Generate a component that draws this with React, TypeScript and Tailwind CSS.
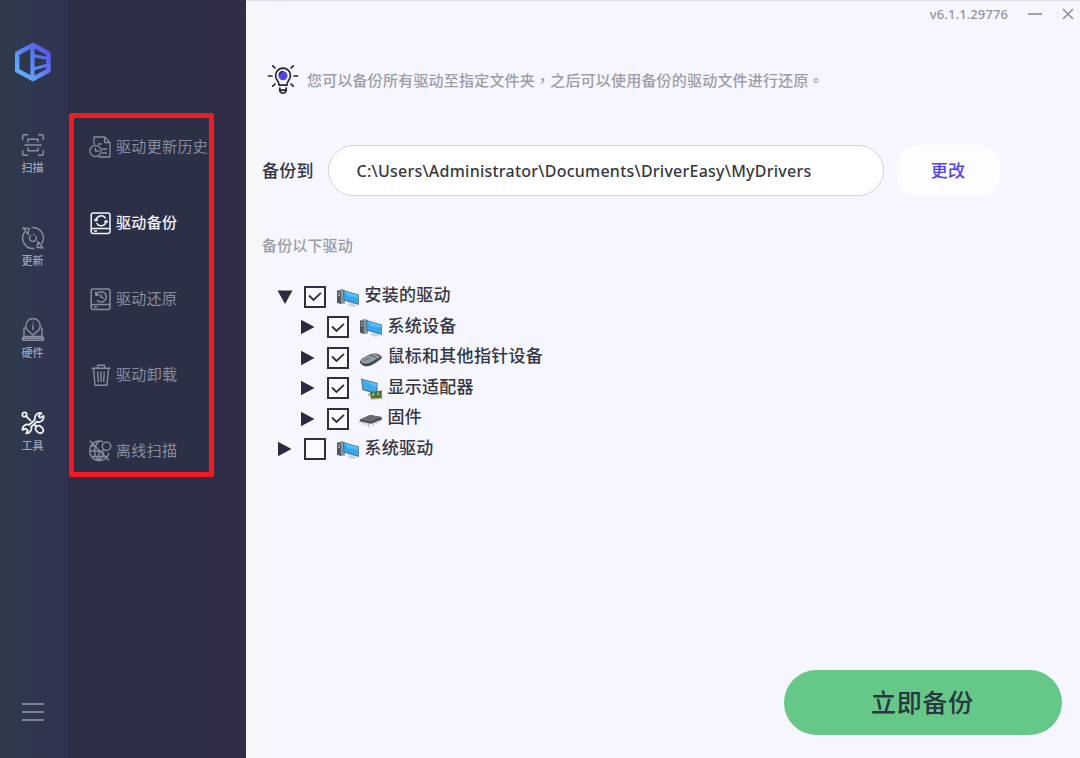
import type { ReactNode } from 'react';

function Logo() {
  return (
    <svg width="38" height="40" viewBox="0 0 38 40" fill="none" strokeLinejoin="round">
      <defs>
        <linearGradient id="logo" x1="4" y1="34" x2="34" y2="6" gradientUnits="userSpaceOnUse">
          <stop offset="0" stopColor="#62b4fb" />
          <stop offset="0.5" stopColor="#5a84f6" />
          <stop offset="1" stopColor="#5b50e8" />
        </linearGradient>
      </defs>
      <g stroke="url(#logo)">
        <path d="M19 3 34.5 11.5V28.5L19 37 3.2 28.5V11.5Z" strokeWidth="4.4" />
        <path d="M18.5 3V37" strokeWidth="4.2" />
        <path d="M19 13.5 34 16.5M19 27 34 23" strokeWidth="3.2" />
      </g>
    </svg>
  );
}

function ScanIcon() {
  return (
    <svg width="24" height="24" viewBox="0 0 24 24" fill="none" stroke="currentColor" strokeWidth="1.4">
      <path d="M1.7 7V3Q1.7 1.7 3 1.7H7M17 1.7H21Q22.3 1.7 22.3 3V7M22.3 17V21Q22.3 22.3 21 22.3H17M7 22.3H3Q1.7 22.3 1.7 21V17" />
      <path d="M7 9.5V6.2H17V9.5M7 14.5V17.8H17V14.5M3.5 12H20.5" />
    </svg>
  );
}

function UpdateIcon() {
  return (
    <svg width="24" height="24" viewBox="0 0 24 24" fill="none" stroke="currentColor" strokeWidth="1.4" strokeLinejoin="round">
      <path d="M10.5 1.6A10.5 10.5 0 0 1 20.3 18.2M13.5 22.4A10.5 10.5 0 0 1 3.7 5.8" />
      <path d="M2 2 8 2.7 7 8.2ZM22 22 16 21.3 17 15.8Z" />
      <path d="M10 9A3.5 3.5 0 1 0 14.8 10M12 8.4A3.5 3.5 0 0 1 13.8 8.9" />
    </svg>
  );
}

function HardwareIcon() {
  return (
    <svg width="24" height="24" viewBox="0 0 24 24" fill="none" stroke="currentColor" strokeWidth="1.4" strokeLinejoin="round">
      <path d="M12 17 6.6 12.4A7.2 7.2 0 1 1 17.4 12.4Z" />
      <path d="M12 6.8V12.2M12 4.5V5.5" />
      <path d="M4.5 10H3V18.5H21V10H19.5M3 18.5 1.5 20V22.3H22.5V20L21 18.5M1.5 20.2H22.5" />
    </svg>
  );
}

function ToolsIcon() {
  return (
    <svg width="24" height="24" viewBox="0 0 24 24" fill="none" stroke="currentColor" strokeWidth="1.8" strokeLinejoin="round" strokeLinecap="round">
      <path d="M20.5 2.2A5 5 0 0 0 14 8L12.9 9.7 8.2 13.8A5 5 0 0 0 1.5 19L4.7 17.7 6.9 19.5 5.2 22.4A5 5 0 0 0 10.2 16L15.7 10.6A5 5 0 0 0 22.5 5L19.2 6.8 17.3 4.9Z" />
      <circle cx="3.5" cy="3.5" r="2.2" />
      <path d="M5.1 5.1 9.6 9.6M14 14 15.5 15.5" />
      <path d="M15.4 15.3Q18 13.7 20.2 15.8L21.4 17Q23.3 19.3 21.4 21.3 19.3 23.2 17 21.4L15.3 19.7Q13.6 17.6 15.4 15.3Z" />
    </svg>
  );
}

function HistoryIcon() {
  return (
    <svg width="24" height="24" viewBox="0 0 24 24" fill="none" stroke="currentColor" strokeWidth="1.3" strokeLinejoin="round">
      <path d="M5 9.5V2H15.5L21 7.5V22H9.5M15.5 2V7.5H21" />
      <circle cx="6.5" cy="16" r="5.6" />
      <path d="M6.5 12.5V16H10M9 9H12.5M13 14H18M13 18H18" />
    </svg>
  );
}

function Disk({ children }: { children: ReactNode }) {
  return (
    <svg width="24" height="24" viewBox="0 0 24 24" fill="none" stroke="currentColor" strokeWidth="1.5" strokeLinejoin="round">
      <rect x="2.2" y="2" width="18.8" height="20.4" rx="2" />
      <path d="M2.2 19.6Q2.4 17.5 4.5 17.5H21M5 20.1H8" />
      {children}
    </svg>
  );
}

function BackupIcon() {
  return (
    <Disk>
      <path d="M7 9A5.2 5.2 0 0 1 16.6 7.5M17.2 10.7A5.2 5.2 0 0 1 7.6 12.2" />
      <path d="M5.3 8 7 10 9 8.3M15.2 11.3 17.2 9.5 19 11.5" strokeWidth="1.2" />
    </Disk>
  );
}

function RestoreIcon() {
  return (
    <Disk>
      <path d="M7.2 8A5.2 5.2 0 1 1 8 13.2M6.8 4.8V8.2H10M12 7V10L14.5 11.2" />
    </Disk>
  );
}

function TrashIcon() {
  return (
    <svg width="24" height="24" viewBox="0 0 24 24" fill="none" stroke="currentColor" strokeWidth="1.4" strokeLinejoin="round">
      <path d="M2.5 5.2H21.5M8.5 5V2.2H15.5V5M4.5 5.5 6 22.3H18L19.5 5.5M8.8 8.5 9.3 19M12 8.5V19M15.2 8.5 14.7 19" />
    </svg>
  );
}

function OfflineIcon() {
  return (
    <svg width="24" height="24" viewBox="0 0 24 24" fill="none" stroke="currentColor" strokeWidth="1.4">
      <path d="M14 2.7A9.8 9.8 0 1 0 20 14M.7 12H12.5M10 2.3Q5.5 6.5 5.5 12T10 21.8Q14.5 18 14.7 13M10 11V21.8M2.5 17.5H17.5M2.5 6.8H6.5" />
      <path d="M.8 1.8 20 21.5" />
      <circle cx="17.5" cy="7.3" r="4.2" />
      <path d="M14.8 10.5 12.2 13.5" />
    </svg>
  );
}

function BulbIcon() {
  return (
    <svg width="32" height="32" viewBox="0 0 32 32" fill="none" stroke="#23253a" strokeWidth="1.7" strokeLinecap="round">
      <path d="M12.2 22.2Q12 19.5 10.4 17.4A7.4 7.4 0 1 1 21.6 17.4Q20 19.5 19.8 22.2Z" />
      <path d="M12.8 25V28L14.5 30H17.5L19.2 28V25M12.8 27.2H19.2" />
      <path d="M1.5 13H5M27 13H30.5M5.8 2.8 8 5M26.2 2.8 24 5M5.8 23.2 8 21M26.2 23.2 24 21" />
      <circle cx="16" cy="12.7" r="4.5" fill="#5046e5" stroke="none" />
      <path d="M12 11.8Q12.8 8.7 16 8.4" strokeWidth="1.1" />
    </svg>
  );
}

function ComputerIcon() {
  return (
    <svg width="24" height="20" viewBox="0 0 24 20">
      <path d="M1 2.5 5.5 1 9 2V15.5L4.5 16 1 14.5Z" fill="#8b959c" />
      <path d="M1 2.5 4.8 3.3V16L1 14.5Z" fill="#4d555d" />
      <path d="M1.8 5 4 5.4M1.8 7.3 4 7.7" stroke="#b9c3c8" strokeWidth="1" />
      <path d="M13 15 18 16.2 21 17.5 17 19 11.5 17.3Z" fill="#cbd0d6" />
      <path d="M7 2 22.8 6.4V17L7.5 12.4Z" fill="#44718f" />
      <path d="M8 3.2 22 7.1V15.8L8.3 11.7Z" fill="#35a6f2" />
      <path d="M8 3.2 22 7.1V10L12 8Z" fill="#58bcfa" />
    </svg>
  );
}

function MouseIcon() {
  return (
    <svg width="24" height="20" viewBox="0 0 24 20">
      <path d="M1 12.2Q2 9.5 8 6.7 13 4 17 4.6 22.6 6 22.8 9.2 20 11.4 13.8 15.6 9 18.5 4 16.4 .8 14.8 1 12.2Z" fill="#42484c" />
      <path d="M1.6 11.8Q4 9 9 6.8 14 4.6 17 5.2 20.4 6.3 21.2 8.2 15 11 11.7 13.6 8 15.5 4.5 14.3 1.6 13.6 1.6 11.8Z" fill="#929b9e" />
      <path d="M11 6.5Q16 7 18.2 9.4M5 11.6 10.5 8.8" stroke="#5d666a" strokeWidth="1" fill="none" />
    </svg>
  );
}

function DisplayIcon() {
  return (
    <svg width="24" height="22" viewBox="0 0 24 22">
      <path d="M9 15 13 16.5V19L9 18Z" fill="#b8c1c8" />
      <path d="M2 .5 18.5 5V16.5L3.3 12Z" fill="#527185" />
      <path d="M3 1.7 17.5 5.8V15L4.1 11Z" fill="#3da9ef" />
      <path d="M3 1.7 17.5 5.8V9Z" fill="#64bdf3" />
      <path d="M11 14 22.5 12.8V20L12 20.7Z" fill="#477145" />
      <path d="M13 15H15.2V18H13ZM18 14.5H20V17H18Z" fill="#a5b568" />
      <path d="M12 21.2 20 20.5" stroke="#c49b48" />
      <path d="M22.5 12V21" stroke="#888d8a" />
    </svg>
  );
}

function ChipIcon() {
  return (
    <svg width="24" height="20" viewBox="0 0 24 20">
      <path d="M1 9.5V13M4 11V14.5M7 12V15.5M10 13V17M14 12V15.5M17 10.5V14M20 9V12.5M22.3 7.5V11" stroke="#b5b2ae" strokeWidth="1.3" />
      <path d="M1 9.5 11 5 22.5 7V9.5L12 13.8 1 11.2Z" fill="#45484c" />
      <path d="M1 9.5 11 5 22.5 7 12 11.8Z" fill="#696d71" />
    </svg>
  );
}

function RailItem({ label, active, children }: { label: string; active?: boolean; children: ReactNode }) {
  return (
    <button className={`flex h-[92.5px] w-full flex-col items-center ${active ? 'text-[#f0f1fa]' : 'text-[#8990a1]'}`}>
      {children}
      <span className="mt-[3px] text-[11px] font-medium leading-4 text-[#a0a4b4]">{label}</span>
    </button>
  );
}

function MenuItem({ label, active, children }: { label: string; active?: boolean; children: ReactNode }) {
  return (
    <button className={`flex h-[76.1px] items-start gap-[3px] whitespace-nowrap text-[15px] leading-[23px] tracking-[0.35px] ${active ? 'text-[#f4f5fc]' : 'text-[#868d9f]'}`}>
      <span className="shrink-0">{children}</span>
      <span className={active ? 'font-medium' : 'font-normal'}>{label}</span>
    </button>
  );
}

type RowProps = { label: string; checked?: boolean; open?: boolean; child?: boolean; icon: ReactNode };

function TreeRow({ label, checked, open, child, icon }: RowProps) {
  return (
    <li className={`flex h-[30.5px] items-center ${child ? 'pl-[23px]' : ''}`}>
      <svg className="mr-[11px] shrink-0" width="16" height="16" viewBox="0 0 16 16" fill="#2b2b3f">
        {open ? <path d="M.5 1.5H15.5L8 15Z" /> : <path d="M1 .7 14.5 8 1 15.3Z" />}
      </svg>
      <span className="mr-2.5 flex size-[22px] shrink-0 items-center justify-center border-2 border-[#2f2f40] bg-[#fbfbff]">
        {checked && (
          <svg width="14" height="11" viewBox="0 0 14 11" fill="none" stroke="#2f2f40" strokeWidth="1.8">
            <path d="M1 4.5 5.5 9 13 1.8" />
          </svg>
        )}
      </span>
      <span className="mr-[5px] flex w-6 shrink-0 pt-0.5">{icon}</span>
      <span className="-mt-[3px] text-[17px] font-medium leading-6 tracking-[0.28px] text-[#353643]">{label}</span>
    </li>
  );
}

export default function App() {
  return (
    <div lang="zh-CN" className="flex h-[758px] w-[1080px] overflow-hidden bg-[#f5f6fe] font-['Noto_Sans','Noto_Sans_CJK_SC',sans-serif]">
      <nav className="flex w-[68px] shrink-0 flex-col items-center bg-linear-to-r from-[#2d3b4b] to-[#303350] pr-[3px] pt-[42px]">
        <Logo />
        <div className="mt-[51px] flex w-full flex-col">
          <RailItem label="扫描"><ScanIcon /></RailItem>
          <RailItem label="更新"><UpdateIcon /></RailItem>
          <RailItem label="硬件"><HardwareIcon /></RailItem>
          <RailItem label="工具" active><ToolsIcon /></RailItem>
        </div>
        <button className="mb-[37px] mt-auto flex w-[22px] flex-col gap-1.5">
          <span className="h-[2px] w-full bg-[#7b8296]" />
          <span className="h-[2px] w-full bg-[#7b8296]" />
          <span className="h-[2px] w-full bg-[#7b8296]" />
        </button>
      </nav>

      <aside className="w-[177.5px] shrink-0 bg-linear-to-r from-[#2c2f46] from-70% to-[#322c48] pl-px pt-[113px]">
        <div className="h-[364px] w-[145px] rounded-[2px] border-[5px] border-[#ed1c24] bg-[#2c3046] pl-[15px] pt-[17px]">
          <MenuItem label="驱动更新历史"><HistoryIcon /></MenuItem>
          <MenuItem label="驱动备份" active><BackupIcon /></MenuItem>
          <MenuItem label="驱动还原"><RestoreIcon /></MenuItem>
          <MenuItem label="驱动卸载"><TrashIcon /></MenuItem>
          <MenuItem label="离线扫描"><OfflineIcon /></MenuItem>
        </div>
      </aside>

      <main className="flex flex-1 flex-col border-t border-[#dcdce9] bg-linear-to-r from-[#f6f8f8] to-[#f5f6fe] to-5% pl-[16.5px]">
        <header className="flex h-[26px] items-center justify-end pr-1.5 text-[#92939f]">
          <span className="text-[13px] font-medium leading-5 tracking-[0.1px]">v6.1.1.29776</span>
          <svg className="ml-5" width="14" height="12" viewBox="0 0 14 12" stroke="currentColor" strokeWidth="1.7"><path d="M0 6H14" /></svg>
          <svg className="ml-5" width="12" height="12" viewBox="0 0 12 12" stroke="currentColor" strokeWidth="1.7"><path d="M1 1 11 11M11 1 1 11" /></svg>
        </header>

        <div className="mt-9 flex h-8 items-center pl-[5px]">
          <BulbIcon />
          <p lang="zh-TW" className="ml-2 mt-0.5 whitespace-nowrap font-['Noto_Sans_CJK_TC',sans-serif] text-[15px] font-medium leading-6 tracking-[0.2px] text-[#9d9da6]">
            您可以备份所有驱动至指定文件夹，之后可以使用备份的驱动文件进行还原。
          </p>
        </div>

        <div className="mt-[50px] flex h-[51px] items-center">
          <span className="w-[65.5px] shrink-0 text-[17px] font-medium tracking-[0.2px] text-[#353541]">备份到</span>
          <div className="flex h-[51px] w-[556px] shrink-0 items-center rounded-full border border-[#d2d2de] bg-white pl-7">
            <span className="mt-px whitespace-nowrap font-['Noto_Sans',sans-serif] text-[16px] font-medium tracking-[0.24px] text-[#363740]">
              C:\Users\Administrator\Documents\DriverEasy\MyDrivers
            </span>
          </div>
          <button className="ml-[13px] h-[51px] w-[103px] rounded-[20px] bg-[#fdfdff] text-[17px] font-medium tracking-[0.3px] text-[#5347e0]">更改</button>
        </div>

        <h2 className="mt-[37px] text-[15px] font-medium leading-6 tracking-[0.15px] text-[#9a9ba5]">备份以下驱动</h2>

        <ul className="ml-[14.5px] mt-[24.5px]">
          <TreeRow label="安装的驱动" checked open icon={<ComputerIcon />} />
          <TreeRow label="系统设备" checked child icon={<ComputerIcon />} />
          <TreeRow label="鼠标和其他指针设备" checked child icon={<MouseIcon />} />
          <TreeRow label="显示适配器" checked child icon={<DisplayIcon />} />
          <TreeRow label="固件" checked child icon={<ChipIcon />} />
          <TreeRow label="系统驱动" icon={<ComputerIcon />} />
        </ul>

        <button className="mb-[23px] mr-[18.5px] mt-auto h-[65px] w-[278px] self-end rounded-full bg-[#65c888] text-[25px] font-medium tracking-[0.7px] text-[#28363f]">
          立即备份
        </button>
      </main>
    </div>
  );
}
